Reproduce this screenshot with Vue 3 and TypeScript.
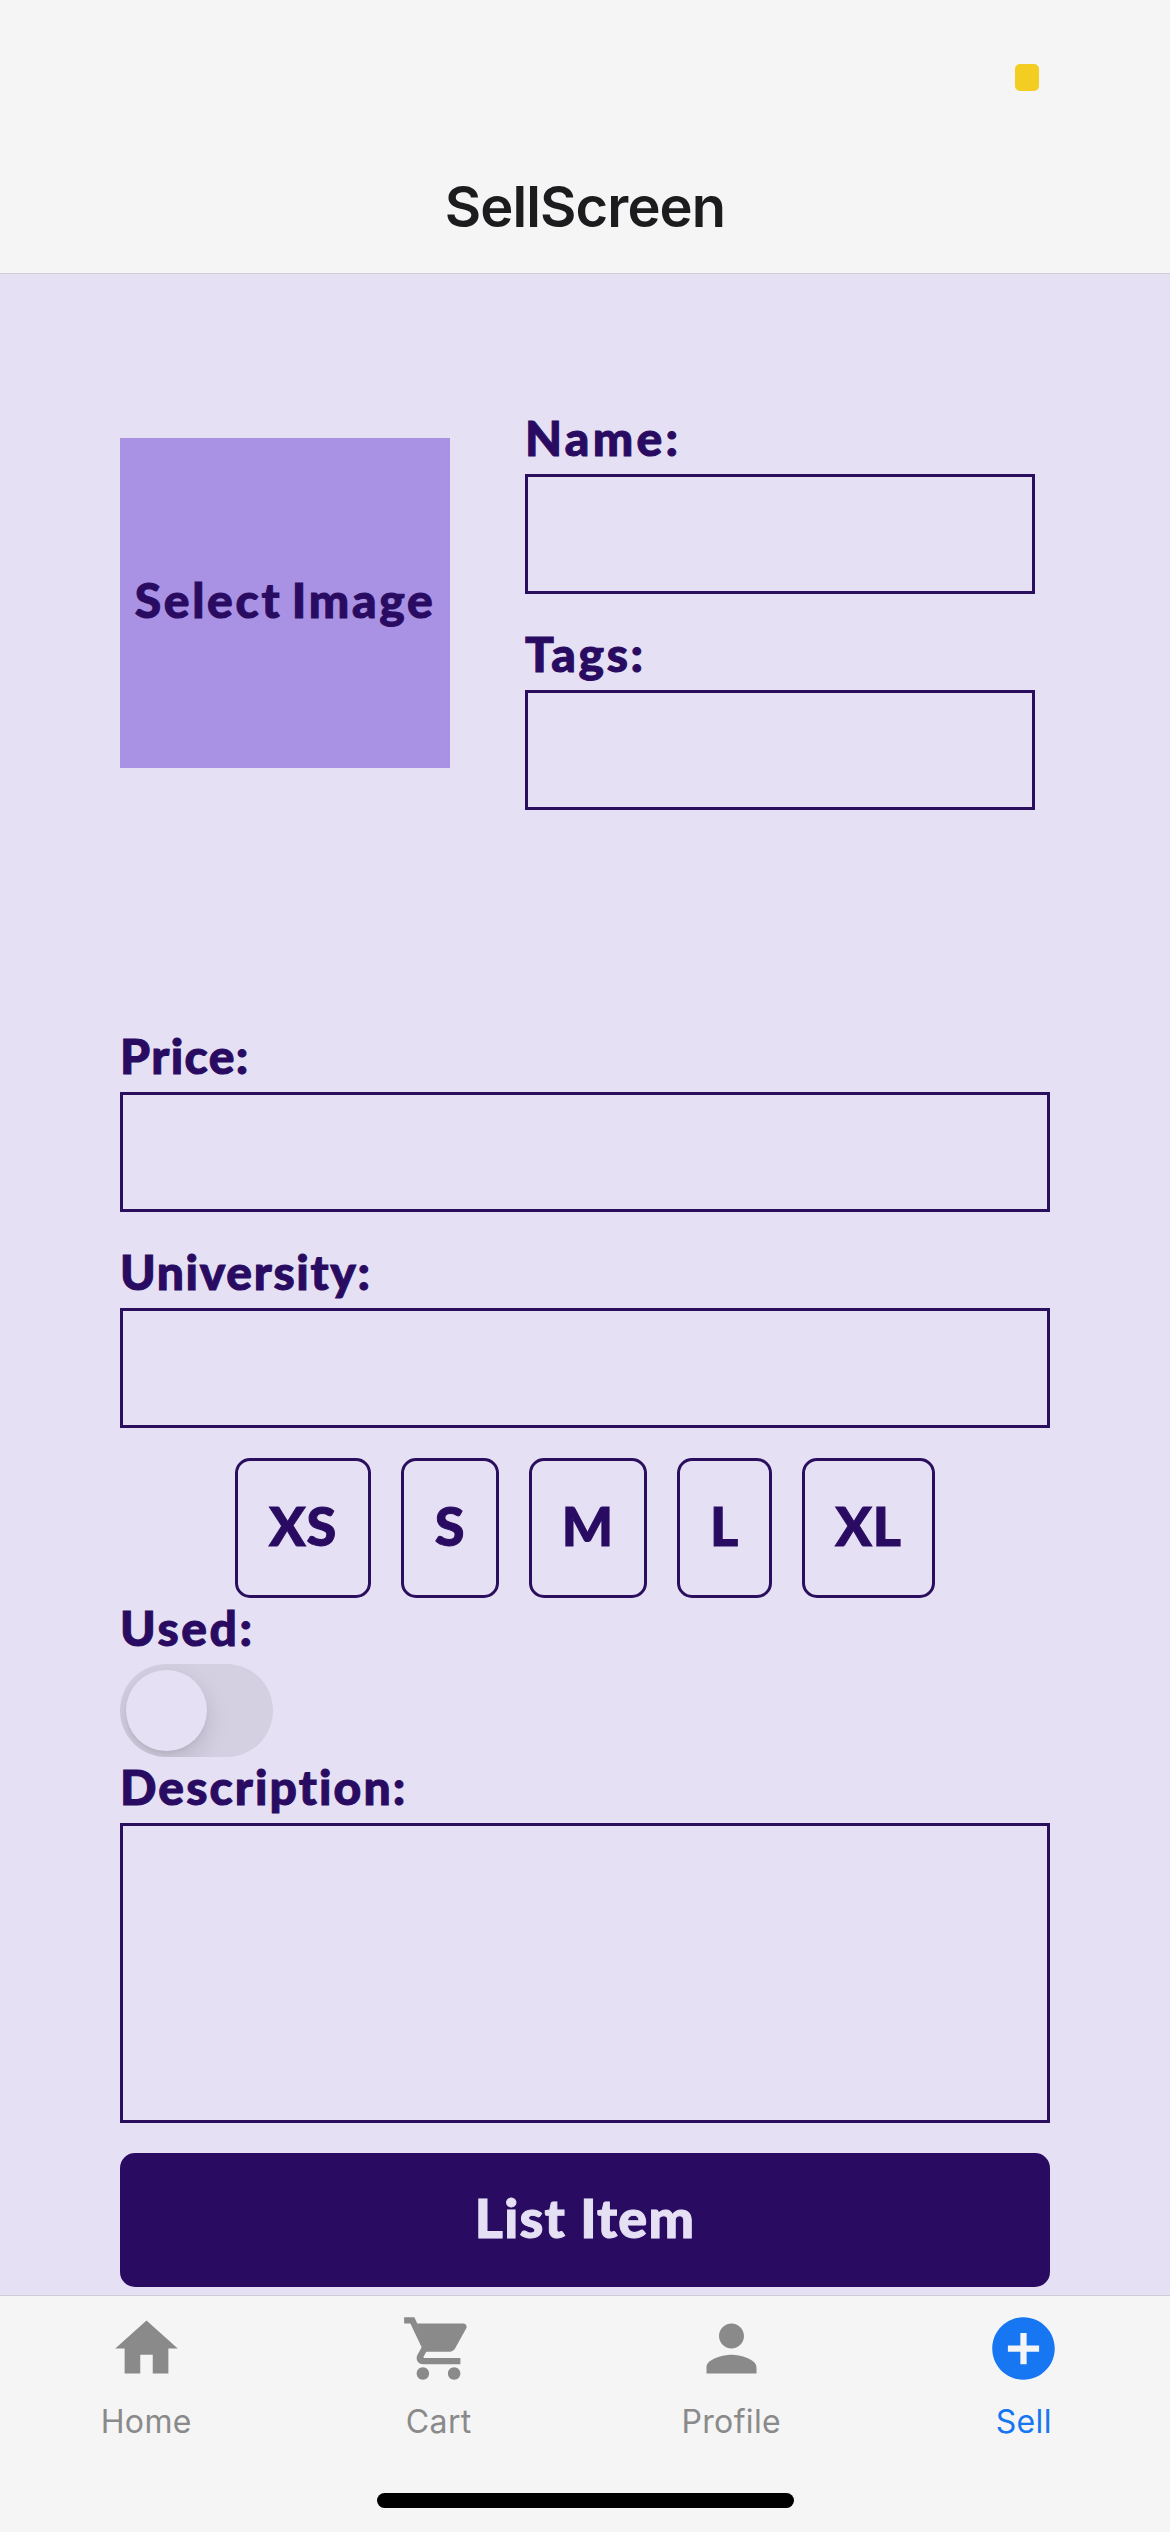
<script setup lang="ts">
import { ref } from 'vue'

interface Size {
  label: string
  width: number
}

interface Tab {
  label: string
  path: string
  active?: boolean
}

const sizes: Size[] = [
  { label: 'XS', width: 136 },
  { label: 'S', width: 98 },
  { label: 'M', width: 118 },
  { label: 'L', width: 95 },
  { label: 'XL', width: 133 },
]

const tabs: Tab[] = [
  { label: 'Home', path: 'M10 20v-6h4v6h5v-8h3L12 3 2 12h3v8z' },
  {
    label: 'Cart',
    path: 'M7 18c-1.1 0-1.99.9-1.99 2S5.9 22 7 22s2-.9 2-2-.9-2-2-2zM1 2v2h2l3.6 7.59-1.35 2.45c-.16.28-.25.61-.25.96 0 1.1.9 2 2 2h12v-2H7.42c-.14 0-.25-.11-.25-.25l.03-.12.9-1.63h7.45c.75 0 1.41-.41 1.75-1.03l3.58-6.49c.08-.14.12-.31.12-.48 0-.55-.45-1-1-1H5.21l-.94-2H1zm16 16c-1.1 0-1.99.9-1.99 2s.89 2 1.99 2 2-.9 2-2-.9-2-2-2z',
  },
  {
    label: 'Profile',
    path: 'M12 12c2.21 0 4-1.79 4-4s-1.79-4-4-4-4 1.79-4 4 1.79 4 4 4zm0 2c-2.67 0-8 1.34-8 4v2h16v-2c0-2.66-5.33-4-8-4z',
  },
  {
    label: 'Sell',
    path: 'M12 2C6.48 2 2 6.48 2 12s4.48 10 10 10 10-4.48 10-10S17.52 2 12 2zm5 11h-4v4h-2v-4H7v-2h4V7h2v4h4v2z',
    active: true,
  },
]

const used = ref(false)
</script>

<template>
  <div class="screen">
    <header class="header">
      <div class="status"><span class="indicator"></span></div>
      <h1 class="title">SellScreen</h1>
    </header>

    <main class="form">
      <section class="top">
        <button class="picker"><span class="label pick-label">Select Image</span></button>
        <div class="fields">
          <div class="label name">Name:</div>
          <div class="input"></div>
          <div class="label wide">Tags:</div>
          <div class="input"></div>
        </div>
      </section>

      <div class="label price">Price:</div>
      <div class="input"></div>
      <div class="label">University:</div>
      <div class="input"></div>

      <div class="sizes">
        <button v-for="s in sizes" :key="s.label" class="size" :style="{ width: s.width + 'px' }">
          <span class="big">{{ s.label }}</span>
        </button>
      </div>

      <div class="label wide">Used:</div>
      <div class="switch" role="switch" :aria-checked="used" @click="used = !used">
        <span class="knob"></span>
      </div>
      <div class="label description">Description:</div>
      <div class="input area"></div>
      <button class="submit"><span class="big submit-label">List Item</span></button>
    </main>

    <nav class="tabs">
      <div class="tab-row">
        <a v-for="t in tabs" :key="t.label" class="tab" :class="{ active: t.active }">
          <svg class="icon" viewBox="0 0 24 24"><path :d="t.path" fill="currentColor" /></svg>
          <span class="tab-label">{{ t.label }}</span>
        </a>
      </div>
      <div class="home-bar"></div>
    </nav>
  </div>
</template>

<style>
body {
  margin: 0;
  background: #f5f5f5;
}
</style>

<style scoped>
* {
  box-sizing: border-box;
}
button {
  margin: 0;
  padding: 0;
  border: 0;
  background: none;
  color: inherit;
}
.screen {
  width: 1170px;
  height: 2532px;
  display: flex;
  flex-direction: column;
  overflow: hidden;
  background: #e6e0f4;
  color: #290c62;
}
.header {
  height: 274px;
  flex: none;
  background: #f5f5f5;
  border-bottom: 1px solid #d1cfd8;
}
.status {
  height: 141px;
  padding: 64px 131px 0 0;
  display: flex;
  justify-content: flex-end;
}
.indicator {
  width: 24px;
  height: 27px;
  border-radius: 5px;
  background: #f4cd23;
}
.title {
  margin: 0;
  padding-top: 33px;
  text-align: center;
  font: 600 56px/66px Inter, sans-serif;
  letter-spacing: -0.9px;
  color: #1c1c1e;
}
.form {
  flex: none;
  height: 2021px;
  padding: 134px 120px 0;
}
.top {
  display: flex;
  gap: 75px;
  height: 618px;
  align-items: flex-start;
}
.picker {
  width: 330px;
  height: 330px;
  margin-top: 30px;
  flex: none;
  background: #a991e4;
  display: flex;
  align-items: center;
  justify-content: center;
}
.fields {
  width: 510px;
}
.label {
  display: block;
  height: 66px;
  font: 900 48px/60px Lato, sans-serif;
  letter-spacing: 1.7px;
  white-space: nowrap;
  -webkit-text-stroke: 1px currentColor;
}
.wide {
  letter-spacing: 2.6px;
}
.name {
  letter-spacing: 3.3px;
}
.price {
  letter-spacing: 1.4px;
}
.description {
  letter-spacing: 2.1px;
}
.pick-label {
  letter-spacing: 2.7px;
  word-spacing: -4.5px;
}
.input {
  height: 120px;
  margin-bottom: 30px;
  border: 3px solid #290f5e;
}
.area {
  height: 300px;
}
.sizes {
  display: flex;
  justify-content: center;
  gap: 30px;
}
.size {
  height: 140px;
  border: 3px solid #290f5e;
  border-radius: 15px;
  display: flex;
  align-items: center;
  justify-content: center;
}
.big {
  height: 74px;
  font: 900 54px/69px Lato, sans-serif;
  letter-spacing: 0.9px;
  white-space: nowrap;
  -webkit-text-stroke: 1px currentColor;
}
.submit-label {
  letter-spacing: 1.2px;
}
.switch {
  width: 153px;
  height: 93px;
  padding: 6px;
  border-radius: 47px;
  background: #d4cfe1;
  overflow: hidden;
}
.knob {
  display: block;
  width: 81px;
  height: 81px;
  border-radius: 50%;
  background: #e6e0f4;
  box-shadow: 0 9px 24px rgba(0, 0, 0, 0.13), 0 3px 3px rgba(0, 0, 0, 0.04);
}
.submit {
  width: 930px;
  height: 134px;
  border-radius: 15px;
  background: #290c62;
  color: #e6e0f4;
  display: flex;
  align-items: center;
  justify-content: center;
}
.tabs {
  flex: 1;
  background: #f5f5f5;
  border-top: 1px solid #cfcbd8;
  display: flex;
  flex-direction: column;
  align-items: center;
}
.tab-row {
  width: 100%;
  height: 197px;
  padding-top: 15px;
  display: flex;
}
.tab {
  flex: 1;
  display: flex;
  flex-direction: column;
  align-items: center;
  color: #8a8a8b;
}
.tab.active {
  color: #1776f1;
}
.icon {
  width: 75px;
  height: 75px;
}
.tab-label {
  margin-top: 16px;
  font: 400 32px/40px Inter, sans-serif;
  letter-spacing: 0.35px;
}
.home-bar {
  width: 417px;
  height: 15px;
  border-radius: 8px;
  background: #000;
}
</style>
